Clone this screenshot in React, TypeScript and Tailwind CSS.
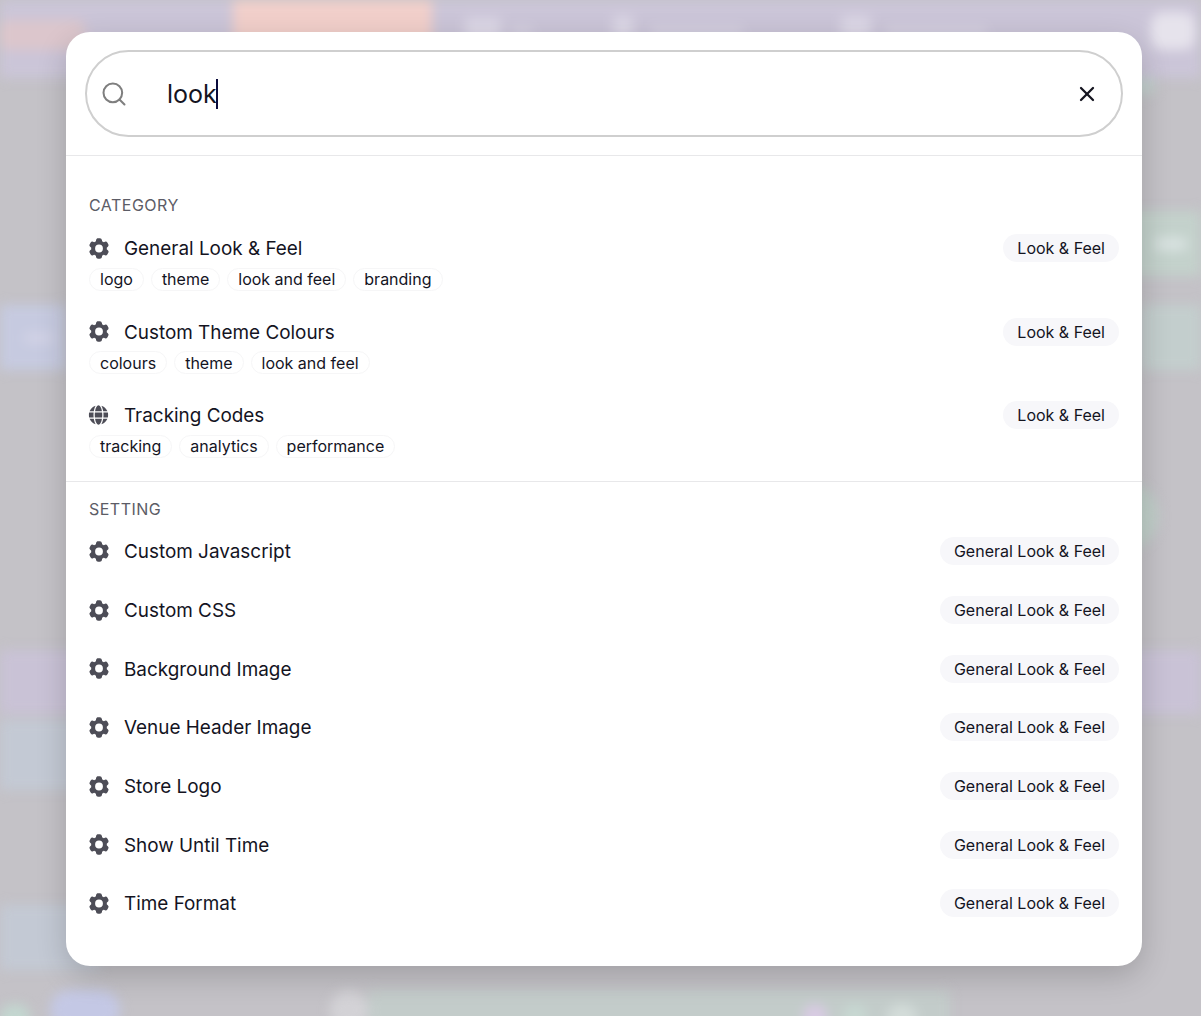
import { Search, X } from "lucide-react";
import { HiCog6Tooth } from "react-icons/hi2";
import { FaGlobe } from "react-icons/fa";

const categories = [
  { title: "General Look & Feel", icon: "gear", tags: ["logo", "theme", "look and feel", "branding"] },
  { title: "Custom Theme Colours", icon: "gear", tags: ["colours", "theme", "look and feel"] },
  { title: "Tracking Codes", icon: "globe", tags: ["tracking", "analytics", "performance"] },
];

const settings = [
  "Custom Javascript",
  "Custom CSS",
  "Background Image",
  "Venue Header Image",
  "Store Logo",
  "Show Until Time",
  "Time Format",
];

function Badge({ label }: { label: string }) {
  return (
    <span className="flex h-7 items-center rounded-full bg-[#f7f7fa] px-[14px] text-[16px] text-[#14141f]">
      {label}
    </span>
  );
}

function RowTitle({ title, icon }: { title: string; icon: string }) {
  return (
    <div className="flex h-7 items-center">
      <div className="flex w-[20px] -translate-x-[0.5px] justify-center text-[#4d4d57]">
        {icon === "globe" ? <FaGlobe size={20} /> : <HiCog6Tooth size={25} className="shrink-0" />}
      </div>
      <span className="ml-[15px] pt-[2px] text-[18.9px] leading-7 text-[#14141f]">{title}</span>
    </div>
  );
}

function Backdrop() {
  return (
    <div className="flex h-[1016px] flex-col blur-[6px]">
      <div className="flex h-[78px] shrink-0 bg-[#cbc5d8]">
        <div className="mt-[20px] h-[30px] w-[85px] rounded-lg bg-[#dcc6cc]" />
        <div className="ml-[148px] h-[48px] w-[199px] rounded-b-lg bg-[#f1cfca]" />
        <div className="ml-[33px] mt-[18px] h-[26px] w-[36px] rounded bg-[#dcd7e6]" />
        <div className="ml-[10px] mt-[26px] h-[12px] w-[22px] rounded bg-[#d5d0e0]" />
        <div className="ml-[80px] mt-[16px] h-[24px] w-[20px] rounded bg-[#dcd7e6]" />
        <div className="ml-[18px] mt-[26px] h-[12px] w-[92px] rounded bg-[#d5d0e0]" />
        <div className="ml-[98px] mt-[16px] h-[24px] w-[30px] rounded bg-[#dcd7e6]" />
        <div className="ml-[14px] mt-[26px] h-[12px] w-[102px] rounded bg-[#d5d0e0]" />
        <div className="ml-auto mr-[6px] mt-[12px] h-[38px] w-[44px] rounded-xl bg-[#e6e3ec]" />
      </div>
      <div className="flex h-[17px] shrink-0 justify-end">
        <div className="mr-[46px] h-full w-[64px] rounded-b-lg bg-[#c3d0cd]" />
      </div>
      <div className="mt-[116px] flex h-[65px] shrink-0 items-center justify-end bg-[linear-gradient(to_right,transparent_85%,#c3d1cb_85%)]">
        <div className="mr-[14px] h-[14px] w-[32px] rounded bg-[#d8e2e0]" />
      </div>
      <div className="mt-[29px] flex h-[65px] shrink-0 justify-between">
        <div className="flex w-[66px] items-center justify-center bg-[#c6cae0]">
          <div className="ml-3 h-[10px] w-[30px] rounded bg-[#d3d3e6]" />
        </div>
        <div className="w-[60px] bg-[#c3cecd]" />
      </div>
      <div className="mt-[110px] flex h-[72px] shrink-0 justify-end">
        <div className="mr-[43px] w-[80px] rounded-full bg-[#c0cfc9]" />
      </div>
      <div className="mt-[98px] h-[64px] shrink-0 bg-[#c9c2d6]" />
      <div className="mt-[6px] h-[70px] w-[100px] shrink-0 bg-[#c3c9d4]" />
      <div className="mt-[115px] h-[65px] w-[100px] shrink-0 bg-[#c3c9d4]" />
      <div className="mt-[20px] flex h-[40px] shrink-0">
        <div className="mt-[14px] h-[26px] w-[30px] rounded-full bg-[#c3d7d0]" />
        <div className="ml-[20px] w-[70px] rounded-full bg-[#c4c8e5]" />
        <div className="ml-[210px] w-[38px] rounded-full bg-[#d3d2d6]" />
        <div className="flex w-[582px] items-start rounded bg-[#c3ccca] pl-[435px] pt-[14px]">
          <div className="h-[26px] w-[24px] rounded-full bg-[#d9cbe4]" />
          <div className="ml-[16px] h-[26px] w-[24px] rounded-full bg-[#c7d8d2]" />
          <div className="ml-[20px] h-[26px] w-[30px] rounded-full bg-[#d3dcd9]" />
        </div>
      </div>
    </div>
  );
}

export default function App() {
  return (
    <div
      className="relative h-[1016px] w-[1201px] overflow-hidden bg-[#c4c2c7]"
      style={{ fontFamily: "Inter, 'Noto Sans', sans-serif" }}
    >
      <Backdrop />

      <div className="absolute left-[66px] top-[32px] h-[934px] w-[1076px] overflow-hidden rounded-[24px] bg-white shadow-[0_10px_30px_rgba(0,0,0,0.18)]">
        <div className="border-b border-[#e8e8ea] px-[19px] py-[18px]">
          <div className="flex h-[87px] items-center rounded-full border-2 border-[#cfcfcf] pl-[13px] pr-[22px]">
            <Search size={28} strokeWidth={1.75} className="text-[#7f7f7f]" />
            <div className="ml-[39px] flex flex-1 items-center text-[25px] text-[#14141f]">
              <span className="pt-[2px]">look</span>
              <span className="-ml-px h-[30px] w-[2px] bg-[#0b0b3b]" />
            </div>
            <X size={24} strokeWidth={2.25} className="text-[#14141f]" />
          </div>
        </div>

        <div className="border-b border-[#e8e8ea] px-[23px] pb-[23.5px] pt-[37px]">
          <div className="mb-[17px] h-6 text-[16px] leading-6 tracking-[0.03em] text-[#5c5c66]">CATEGORY</div>
          <div className="flex flex-col gap-[27px]">
            {categories.map((c) => (
              <div key={c.title} className="flex flex-col gap-[5.5px]">
                <div className="flex items-center justify-between">
                  <RowTitle title={c.title} icon={c.icon} />
                  <Badge label="Look & Feel" />
                </div>
                <div className="flex gap-[7px]">
                  {c.tags.map((t) => (
                    <span
                      key={t}
                      className="flex h-[23px] items-center rounded-full border border-[#f6f6f7] px-[10px] text-[16px] text-[#14141f]"
                    >
                      {t}
                    </span>
                  ))}
                </div>
              </div>
            ))}
          </div>
        </div>

        <div className="px-[23px] pt-[15px]">
          <div className="mb-px h-6 text-[16px] leading-6 tracking-[0.03em] text-[#5c5c66]">SETTING</div>
          {settings.map((s) => (
            <div key={s} className="flex h-[58.7px] items-center justify-between">
              <RowTitle title={s} icon="gear" />
              <Badge label="General Look & Feel" />
            </div>
          ))}
        </div>
      </div>
    </div>
  );
}
